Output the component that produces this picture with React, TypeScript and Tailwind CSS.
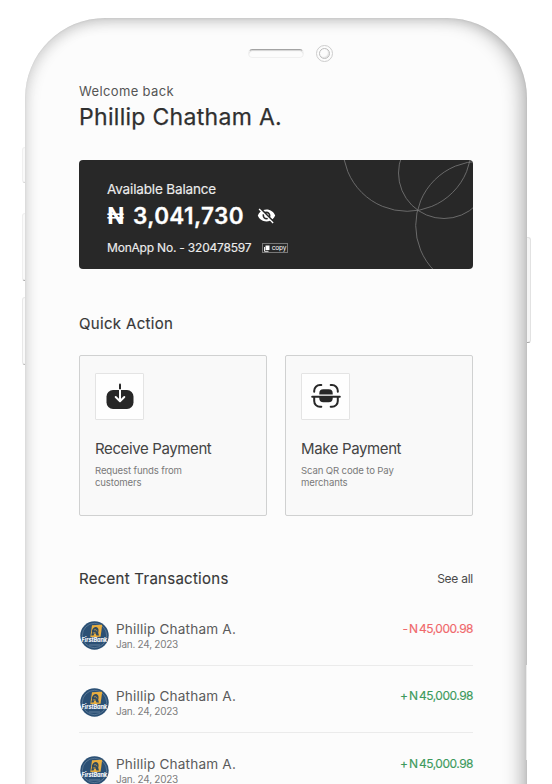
import type { ReactNode } from "react";
import { MdVisibilityOff } from "react-icons/md";

function BankLogo() {
  return (
    <svg width="29" height="29" viewBox="0 0 29 29" className="ml-[0.5px] mt-[22.5px] shrink-0 overflow-visible">
      <circle cx="14.5" cy="14.5" r="14.2" fill="#2b5075" />
      <circle cx="14.5" cy="14.5" r="12.2" fill="none" stroke="#b9c8d6" strokeWidth="0.5" opacity="0.6" />
      <path d="M12 4.3 L22.2 3.8 L20.6 15.8 L10.3 16.2 Z" fill="#e9ae3f" />
      <path
        d="M13.4 7 c1.600-1.400 3.600-1.200 4.600 .2 c.8 1.400 .6 3 .2 4.600 l.8 2.800 h-2.600 l-.6-2.200 l-1.600 .2 l-.6 2 h-2.400 l.8-3 c-.4-1.800 .4-3.400 1.400-4.600 z"
        fill="#2f4a60"
      />
      <path d="M14 9 c1.400-.8 2.800-.2 3 1.400 M12.800 12 l2.600-.4" fill="none" stroke="#e9ae3f" strokeWidth="0.7" />
      <text
        x="14.300"
        y="20.800"
        textAnchor="middle"
        fontSize="5.500"
        fontWeight="800"
        fontStyle="italic"
        fontFamily="Inter, sans-serif"
        letterSpacing="-0.1"
        fill="#f4f7fa"
      >
        FirstBank
      </text>
      <path d="M9 24 h11" stroke="#9fb3c6" strokeWidth="0.6" opacity="0.8" />
    </svg>
  );
}

function ReceiveIcon() {
  return (
    <svg width="30" height="30" viewBox="0 0 30 30" fill="none" className="-mt-[2px]">
      <rect x="1.500" y="9" width="27" height="19" rx="6.500" fill="#272727" />
      <path d="M15 3.600 V9" stroke="#272727" strokeWidth="2" strokeLinecap="round" />
      <path d="M15 9 V19.500 M10.700 16 L15 20.200 L19.300 16" stroke="#fff" strokeWidth="2" strokeLinecap="round" strokeLinejoin="round" />
    </svg>
  );
}

function ScanIcon() {
  return (
    <svg width="30" height="30" viewBox="0 0 30 30" fill="none" className="-mt-[2px]">
      <g stroke="#272727" strokeWidth="2" strokeLinecap="round">
        <path d="M3.200 10.700 V9.800 a5.800 5.800 0 0 1 5.800-5.800 H10.300" />
        <path d="M19.700 4 H21 a5.800 5.800 0 0 1 5.800 5.800 V10.700" />
        <path d="M3.200 16.500 V20 a5.800 5.800 0 0 0 5.800 5.800 H10.300" />
        <path d="M26.800 16.500 V20 a5.800 5.800 0 0 1 -5.800 5.800 H19.700" />
        <path d="M1.200 15.700 H28.800" />
      </g>
      <path d="M8.300 13.400 V12.300 a4 4 0 0 1 4-4 H17.700 a4 4 0 0 1 4 4 V13.400 Z" fill="#272727" />
      <path d="M8.300 15.700 V17.200 a4 4 0 0 0 4 4 H17.700 a4 4 0 0 0 4-4 V15.700 Z" fill="#272727" />
    </svg>
  );
}

function ActionCard({
  icon,
  title,
  lines,
}: {
  icon: ReactNode;
  title: string;
  lines: [string, string];
}) {
  return (
    <div className="h-[161px] w-[188px] rounded-[2px] border border-[#d0d1d1] bg-[#f9f9f9] pl-[15px] pt-[17px]">
      <div className="flex h-[47px] w-[49px] items-center justify-center rounded-[1px] border border-[#e4e4e4] bg-[#fefefe]">
        {icon}
      </div>
      <h3 className="mt-[19px] text-[15px] leading-[20px] tracking-[-0.38px] text-[#444]">{title}</h3>
      <p className="mt-[5.500px] text-[9.6px] leading-[12px] tracking-[-0.14px] text-[#7a7a7a]">
        {lines[0]}
        <br />
        {lines[1]}
      </p>
    </div>
  );
}

function Transaction({ sign, color }: { sign: string; color: string }) {
  return (
    <li className="flex h-[67.5px] border-b border-[#ebebeb]">
      <BankLogo />
      <div className="ml-[7.5px] pt-[21.5px]">
        <p className="text-[13.6px] leading-[18px] tracking-[0.18px] text-[#5a5a5a]">Phillip Chatham A.</p>
        <p className="text-[10px] leading-[12px] tracking-[-0.26px] text-[#7c7c7c]">Jan. 24, 2023</p>
      </div>
      <p className={"ml-auto flex pt-[21.5px] text-[12px] leading-[18px] [-webkit-text-stroke:0.15px] " + color}>
        <span>{sign}</span>
        <span className="ml-px mr-[1px]">N</span>
        <span className="tracking-[-0.5px]">45,000.98</span>
      </p>
    </li>
  );
}

export default function App() {
  return (
    <div className="relative h-[784px] w-[552px] overflow-hidden bg-white pl-[25px] pt-[18px] font-['Inter',sans-serif]">
      {/* Side buttons of the handset */}
      <i className="absolute left-[22px] top-[147px] h-[36px] w-[6px] rounded-l-[3px] border border-[#f0f0f0] border-b-[#d4d4d4] bg-[#fafafa]" />
      <i className="absolute left-[22px] top-[213px] h-[68px] w-[6px] rounded-l-[3px] border border-[#efefef] border-b-[#a8a8a8] bg-[#fafafa]" />
      <i className="absolute left-[22px] top-[297px] h-[68px] w-[6px] rounded-l-[3px] border border-[#e8e8e8] border-b-[#b5b5b5] bg-[#fafafa]" />
      <i className="absolute left-[525px] top-[237px] h-[106px] w-[6px] rounded-r-[3px] border border-[#e2e2e2] border-b-[#a8a8a8] bg-[#f5f5f5]" />

      <div className="relative h-[900px] w-[502px] rounded-[80px] bg-[#fcfcfc] shadow-[inset_0_0_2px_rgba(0,0,0,0.08),inset_6px_5px_14px_-3px_rgba(0,0,0,0.12),inset_-8px_0_20px_-4px_rgba(0,0,0,0.32)]">
        <i className="absolute right-0 top-[647px] h-[95px] w-px bg-[#ececec]" />

        <div className="flex items-center pl-[223px] pt-[27px]">
          <div className="h-[9px] w-[56px] rounded-full border border-[#f0f0f0] border-t-[#a3a3a3] shadow-[inset_0_1px_1px_rgba(0,0,0,0.16)]" />
          <div className="ml-[12px] flex size-[17px] items-center justify-center rounded-full border border-[#cdcdcd]">
            <div className="size-[11px] rounded-full border border-[#bdbdbd] shadow-[inset_-1px_-1px_1px_rgba(0,0,0,0.1)]" />
          </div>
        </div>

        <main className="ml-[54px] w-[394px] pt-[20.5px]">
          <p className="text-[13px] leading-[16px] tracking-[0.36px] text-[#555]">Welcome back</p>
          <h1 className="mt-[4.500px] text-[23px] leading-[28px] tracking-[0.3px] text-[#303030] [-webkit-text-stroke:0.25px]">
            Phillip Chatham A.
          </h1>

          <section className="relative mt-[29px] h-[109px] overflow-hidden rounded-[4px] bg-[#282828] pl-[28px] pt-[20px] text-white">
            <svg className="absolute right-0 top-0" width="134" height="109" viewBox="260 0 134 109" fill="none" stroke="#7b7b7b" strokeWidth="0.8">
              <circle cx="328.200" cy="-13" r="64.300" />
              <circle cx="365" cy="13" r="45.500" />
              <circle cx="401" cy="65.500" r="64.300" />
            </svg>
            <p className="text-[13.5px] leading-[18px] tracking-[-0.15px] text-[#ececec] [-webkit-text-stroke:0.15px]">Available Balance</p>
            <div className="mt-[3.5px] flex h-[28px] items-center text-[22.5px] font-semibold leading-[28px]">
              <span className="w-[26px] font-bold tracking-[-1px]">₦</span>
              <span className="tracking-[0.38px] [-webkit-text-stroke:0.3px]">3,041,730</span>
              <MdVisibilityOff className="ml-[13.5px]" size={19} />
            </div>
            <div className="mt-[10.500px] flex items-center">
              <p className="text-[12px] leading-[16px] tracking-[-0.2px] text-[#ececec] [-webkit-text-stroke:0.15px]">
                MonApp No. - 320478597
              </p>
              <div className="ml-[10.5px] flex h-[10px] w-[26px] items-center justify-center gap-[2px] border border-[#777]">
                <svg width="6" height="7" viewBox="0 0 6 7">
                  <path d="M1.500 0.500 H5.500 V5 H1.500 Z" fill="#fff" />
                  <path d="M0.500 2 V6.300 H4.500" stroke="#fff" strokeWidth="0.9" fill="none" />
                </svg>
                <span className="text-[6.5px] leading-[8px] tracking-[-0.2px]">copy</span>
              </div>
            </div>
          </section>

          <h2 className="mt-[44.500px] text-[15px] leading-[20px] tracking-[0.33px] text-[#383838] [-webkit-text-stroke:0.15px]">
            Quick Action
          </h2>
          <div className="mt-[21.500px] flex justify-between">
            <ActionCard icon={<ReceiveIcon />} title="Receive Payment" lines={["Request funds from", "customers"]} />
            <ActionCard icon={<ScanIcon />} title="Make Payment" lines={["Scan QR code to Pay", "merchants"]} />
          </div>

          <div className="mt-[53px] flex items-center justify-between">
            <h2 className="text-[15px] leading-[20px] tracking-[0.27px] text-[#383838] [-webkit-text-stroke:0.15px]">
              Recent Transactions
            </h2>
            <a className="text-[12px] leading-[20px] tracking-[-0.25px] text-[#4a4a4a]">See all</a>
          </div>
          <ul className="mt-[9px]">
            <Transaction sign="-" color="text-[#f0686b]" />
            <Transaction sign="+" color="text-[#3d9a5c]" />
            <Transaction sign="+" color="text-[#3d9a5c]" />
          </ul>
        </main>
      </div>
    </div>
  );
}
